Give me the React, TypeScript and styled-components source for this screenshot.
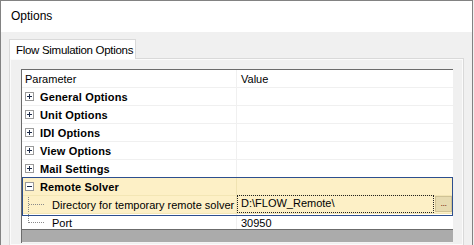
import React from 'react';
import styled, { createGlobalStyle } from 'styled-components';

const GlobalStyle = createGlobalStyle`
  html, body {
    margin: 0;
    padding: 0;
    background: #f0f0f0;
  }
  body {
    font-family: "Liberation Sans", Arial, sans-serif;
    color: #000;
  }
`;

type Group = {
  name: string;
  open?: boolean;
  items?: { label: string; value: string; edit?: boolean }[];
};

const groups: Group[] = [
  { name: 'General Options' },
  { name: 'Unit Options' },
  { name: 'IDI Options' },
  { name: 'View Options' },
  { name: 'Mail Settings' },
  {
    name: 'Remote Solver',
    open: true,
    items: [
      { label: 'Directory for temporary remote solver', value: 'D:\\FLOW_Remote\\', edit: true },
      { label: 'Port', value: '30950' },
    ],
  },
];

const App: React.FC = () => {
  return (
    <>
      <GlobalStyle />
      <Window>
        <TitleBar>Options</TitleBar>
        <Body>
          <TabStrip>
            <Tab>Flow Simulation Options</Tab>
          </TabStrip>
          <TabPage>
            <PropGrid>
              <Rows>
                <Row>
                  <NameCell>Parameter</NameCell>
                  <ValueCell>Value</ValueCell>
                </Row>
                {groups.map((g) => (
                  <GroupBlock key={g.name} selected={!!g.open}>
                    <Row selected={!!g.open}>
                      <NameCell selected={!!g.open}>
                        <Expander>
                          <svg width="9" height="9" viewBox="0 0 9 9">
                            <rect x="0.5" y="0.5" width="8" height="8" fill="#fff" stroke="#9a9a9a" />
                            <path d="M2 4.5h5" stroke="#1c2a48" />
                            {!g.open && <path d="M4.5 2v5" stroke="#1c2a48" />}
                          </svg>
                        </Expander>
                        <GroupName>{g.name}</GroupName>
                      </NameCell>
                      <ValueCell selected={!!g.open} />
                    </Row>
                    {g.items?.map((it, i) => (
                      <Row key={it.label} selected={!!it.edit}>
                        <NameCell selected={!!it.edit}>
                          <TreeLine last={i === (g.items?.length ?? 0) - 1} />
                          <ItemName>{it.label}</ItemName>
                        </NameCell>
                        <ValueCell selected={!!it.edit}>
                          {it.edit ? (
                            <EditBox>
                              <EditText>{it.value}</EditText>
                              <EllipsisButton>...</EllipsisButton>
                            </EditBox>
                          ) : (
                            <span>{it.value}</span>
                          )}
                        </ValueCell>
                      </Row>
                    ))}
                  </GroupBlock>
                ))}
              </Rows>
              <HelpArea />
            </PropGrid>
          </TabPage>
        </Body>
      </Window>
    </>
  );
};

const Window = styled.div`
  width: 471px;
  height: 245px;
  border: 1px solid #828282;
  border-bottom: none;
  display: flex;
  flex-direction: column;
  overflow: hidden;
  background: #f0f0f0;
`;

const TitleBar = styled.div`
  height: 31px;
  background: #fff;
  padding-left: 10px;
  font-size: 12px;
  line-height: 30px;
  flex-shrink: 0;
`;

const Body = styled.div`
  flex: 1;
  padding: 7px 8px 0 8px;
  display: flex;
  flex-direction: column;
`;

const TabStrip = styled.div`
  display: flex;
  height: 20px;
  position: relative;
  z-index: 1;
`;

const Tab = styled.div`
  width: 127px;
  height: 20px;
  border: 1px solid #d9d9d9;
  border-bottom: none;
  background: #fff;
  font-size: 11.5px;
  line-height: 21px;
  padding-left: 6px;
  box-sizing: border-box;
  letter-spacing: -0.3px;
`;

const TabPage = styled.div`
  flex: 1;
  border: 1px solid #d9d9d9;
  box-shadow: inset 0 0 0 1px #fbfbfb;
  margin-top: -1px;
  padding: 10px 10px 0 11px;
  display: flex;
  flex-direction: column;
`;

const PropGrid = styled.div`
  border-top: 1px solid #6b6b6b;
  border-left: 1px solid #6b6b6b;
  background: #fff;
  display: flex;
  flex-direction: column;
`;

const Rows = styled.div`
  height: 159px;
  overflow: hidden;
  font-size: 11px;
`;

const Row = styled.div<{ selected?: boolean }>`
  display: grid;
  grid-template-columns: 215px 1fr;
  height: 18px;
  border-bottom: 1px solid ${(p) => (p.selected ? '#f3e6b5' : '#f0f0f0')};
  box-sizing: border-box;
`;

const GroupBlock = styled.div<{ selected: boolean }>`
  ${(p) =>
    p.selected &&
    `
    position: relative;
    & > div:not(:last-child) {
      background: #fdf0c6;
    }
    &::after {
      content: '';
      position: absolute;
      left: 0;
      top: -1px;
      right: 0;
      height: 37px;
      border: 1px solid #2d4f8e;
      pointer-events: none;
    }
  `}
`;

const NameCell = styled.div<{ selected?: boolean }>`
  display: flex;
  align-items: center;
  padding-left: 3px;
  border-right: 1px solid ${(p) => (p.selected ? '#f0e3b2' : '#f0f0f0')};
  white-space: nowrap;
  overflow: hidden;
  position: relative;
`;

const ValueCell = styled.div<{ selected?: boolean }>`
  display: flex;
  align-items: center;
  padding-left: ${(p) => (p.selected ? '0' : '4px')};
  min-width: 0;
`;

const Expander = styled.span`
  display: inline-flex;
  width: 9px;
  height: 9px;
  margin-right: 6px;
`;

const GroupName = styled.span`
  font-weight: bold;
  letter-spacing: 0.15px;
`;

const TreeLine = styled.span<{ last: boolean }>`
  position: absolute;
  left: 6px;
  top: -4px;
  height: ${(p) => (p.last ? '13px' : '22px')};
  width: 16px;
  border-left: 1px dotted #8a8a8a;
  &::after {
    content: '';
    position: absolute;
    left: 0;
    top: 12px;
    width: 15px;
    border-top: 1px dotted #8a8a8a;
  }
`;

const ItemName = styled.span`
  padding-left: 27px;
`;

const EditBox = styled.div`
  display: flex;
  align-items: stretch;
  width: 100%;
  height: 18px;
  margin-top: -1px;
`;

const EditText = styled.div`
  flex: 1;
  border: 1px dotted #222;
  padding-left: 3px;
  line-height: 15px;
`;

const EllipsisButton = styled.div`
  width: 15px;
  margin: 1px;
  background: #e7dbb0;
  border: 1px solid #cfc295;
  color: #7a2a14;
  font-size: 9px;
  text-align: center;
  line-height: 12px;
  letter-spacing: -0.5px;
`;

const HelpArea = styled.div`
  height: 12px;
  border-top: 1px solid #6b6b6b;
  border-bottom: 1px solid #f4f4f4;
  background: #ababab;
`;

export default App;
